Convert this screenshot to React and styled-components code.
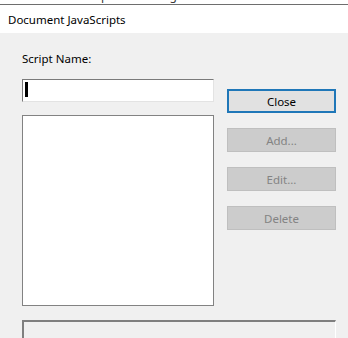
import React from "react";
import styled, { createGlobalStyle } from "styled-components";

const Global = createGlobalStyle`
  html, body {
    margin: 0;
    padding: 0;
    background: #f0f0f0;
  }
  body {
    font-family: "Noto Sans", "Open Sans", sans-serif;
    font-size: 11.5px;
    color: #000;
  }
`;

const App = () => {
  return (
    <Window>
      <Global />
      <DocStrip>
        <DocText>The product images and the associated Word default fields list</DocText>
      </DocStrip>
      <TitleBar>Document JavaScripts</TitleBar>
      <Content>
        <Label>Script Name:</Label>
        <Main>
          <LeftCol>
            <NameInput>
              <Caret />
            </NameInput>
            <ScriptList />
          </LeftCol>
          <Buttons>
            <Button $primary>Close</Button>
            <Button disabled>Add...</Button>
            <Button disabled>Edit...</Button>
            <Button disabled>Delete</Button>
          </Buttons>
        </Main>
        <Preview />
      </Content>
    </Window>
  );
};

export default App;

const Window = styled.div`
  width: 348px;
  height: 338px;
  overflow: hidden;
  background: #f0f0f0;
`;

const DocStrip = styled.div`
  height: 4px;
  overflow: hidden;
  background: #fff;
  border-bottom: 1px solid #6e6e6e;
  padding-left: 77px;
`;

const DocText = styled.div`
  margin-top: -11px;
  line-height: 14px;
  font-size: 12px;
  color: #3a3a3a;
  white-space: nowrap;
`;

const TitleBar = styled.div`
  height: 28px;
  line-height: 30px;
  background: #fff;
  padding-left: 8px;
  color: #000;
`;

const Content = styled.div`
  padding: 18px 12px 0 22px;
`;

const Label = styled.div`
  line-height: 16px;
  height: 16px;
`;

const Main = styled.div`
  display: grid;
  grid-template-columns: 192px 109px;
  column-gap: 13px;
  margin-top: 12px;
`;

const LeftCol = styled.div`
  display: flex;
  flex-direction: column;
  gap: 13px;
`;

const NameInput = styled.div`
  box-sizing: border-box;
  height: 23px;
  background: #fff;
  border-top: 1px solid #7a7a7a;
  border-left: 1px solid #7a7a7a;
  border-right: 1px solid #e3e3e3;
  border-bottom: 1px solid #e3e3e3;
  padding: 2px 0 0 2px;
`;

const Caret = styled.div`
  width: 3px;
  height: 15px;
  background: #000;
`;

const ScriptList = styled.div`
  box-sizing: border-box;
  height: 191px;
  background: #fff;
  border: 1px solid #828282;
`;

const Buttons = styled.div`
  display: flex;
  flex-direction: column;
  gap: 15px;
  padding-top: 10px;
`;

const Button = styled.button`
  box-sizing: border-box;
  height: 24px;
  width: 109px;
  padding: 0;
  font-family: inherit;
  font-size: 11.5px;
  background: ${({ $primary }) => ($primary ? "#e1e1e1" : "#cccccc")};
  border: ${({ $primary }) =>
    $primary ? "2px solid #1f77b8" : "1px solid #bfbfbf"};
  color: ${({ $primary }) => ($primary ? "#000" : "#838383")};
  cursor: pointer;
  &:disabled {
    cursor: default;
  }
`;

const Preview = styled.div`
  box-sizing: border-box;
  margin-top: 14px;
  width: 314px;
  height: 40px;
  background: #f0f0f0;
  border-top: 2px solid #7f7f7f;
  border-left: 2px solid #7f7f7f;
  border-right: 1px solid #fff;
`;
